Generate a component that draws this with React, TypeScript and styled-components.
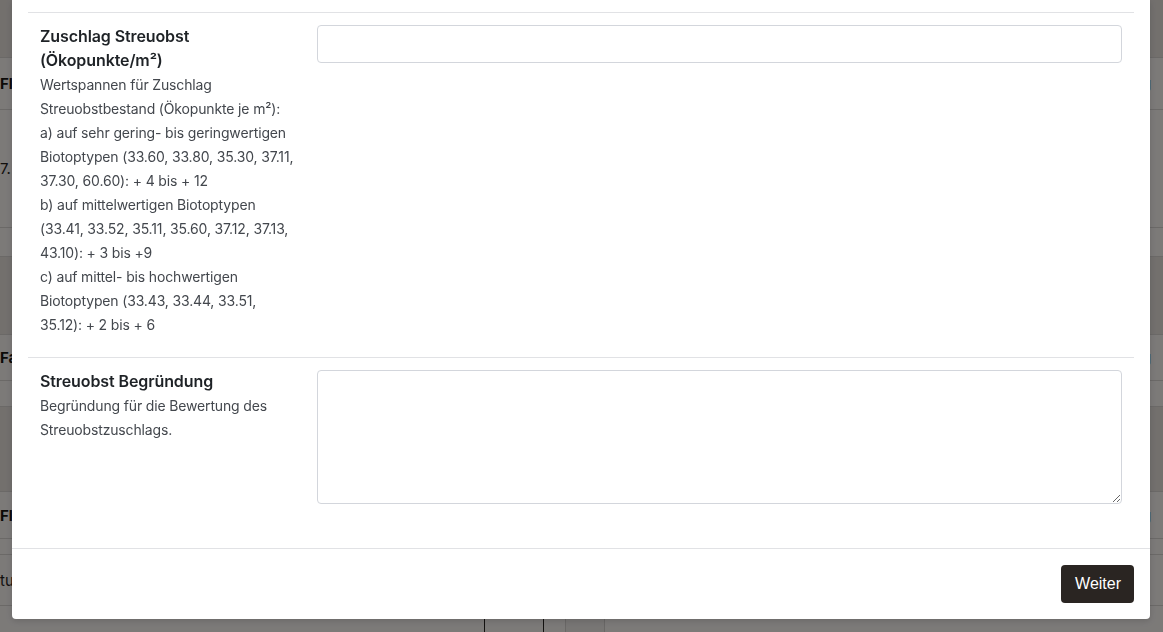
import React from 'react';
import styled, { createGlobalStyle, css } from 'styled-components';

const GlobalStyle = createGlobalStyle`
  html, body {
    margin: 0;
    padding: 0;
    height: 100%;
    overflow: hidden;
    background: #fff;
  }
  #root {
    height: 100%;
  }
`;

/* ---------- page behind the modal ---------- */

const Page = styled.div`
  height: 100%;
  display: grid;
  grid-template-columns: 575px 40px 1fr;
  font-family: Inter, 'Liberation Sans', sans-serif;
  font-size: 15px;
  color: #1d1d1d;
  margin-left: -10px;
`;

const PageColumn = styled.div`
  display: flex;
  flex-direction: column;
`;

const Spacer = styled.div`
  background: #f7f7f7;
  border-left: 1px solid #d9d9d9;
  border-right: 1px solid #d9d9d9;
`;

type BgRowKind = 'band' | 'head' | 'data';

const BgRow = styled.div<{ $h: number; $kind: BgRowKind; $align?: 'left' | 'right' }>`
  height: ${(p) => p.$h}px;
  flex: none;
  display: flex;
  align-items: center;
  justify-content: ${(p) => (p.$align === 'right' ? 'flex-end' : 'flex-start')};
  padding: 0 12px 0 10px;
  border-bottom: 1px solid #dcdcdc;
  ${(p) =>
    p.$kind === 'band' &&
    css`
      background: #ebeae8;
    `}
  ${(p) =>
    p.$kind === 'head' &&
    css`
      font-weight: 700;
      color: #111;
    `}
`;

const GhostButton = styled.div`
  margin: 0 0 0 494px;
  width: 58px;
  height: 30px;
  border: 1px solid #222;
  border-radius: 5px;
`;

const rows: { h: number; kind: BgRowKind; left?: string; right?: string }[] = [
  { h: 57, kind: 'band' },
  { h: 51, kind: 'head', left: 'Flächen', right: 'Bewertung' },
  { h: 117, kind: 'data', left: '7.' },
  { h: 28, kind: 'data' },
  { h: 77, kind: 'band' },
  { h: 45, kind: 'head', left: 'Fachbeitrag', right: 'Bewertung' },
  { h: 25, kind: 'data' },
  { h: 84, kind: 'band' },
  { h: 46, kind: 'head', left: 'Flächen', right: 'Bewertung' },
  { h: 15, kind: 'data' },
  { h: 50, kind: 'data', left: 'tu' },
];

/* ---------- modal ---------- */

const Backdrop = styled.div`
  position: fixed;
  inset: 0;
  background: rgba(8, 4, 0, 0.53);
  display: flex;
  flex-direction: column;
  justify-content: flex-end;
  padding: 0 13px 13px 12px;
`;

const Dialog = styled.div`
  background: #fff;
  border-radius: 0 0 4px 4px;
  box-shadow: 0 2px 6px rgba(0, 0, 0, 0.15);
  font-family: Inter, 'Liberation Sans', sans-serif;
  color: #1f2328;
`;

const Body = styled.div`
  padding: 12px 16px 24px;
`;

const Field = styled.div`
  display: grid;
  grid-template-columns: 258px 1fr;
  column-gap: 19px;
  align-items: start;
  padding: 12px 12px 20px;
  border-top: 1px solid #e1e2e5;
`;

const LabelColumn = styled.div`
  display: flex;
  flex-direction: column;
`;

const FieldTitle = styled.div`
  font-size: 16px;
  font-weight: 600;
  line-height: 24px;
  color: #1e2226;
  letter-spacing: -0.1px;
  margin-top: -1px;
  margin-bottom: 1px;
`;

const Help = styled.div`
  font-size: 14px;
  line-height: 24px;
  color: #43474d;
  letter-spacing: -0.15px;
`;

const controlBase = css`
  box-sizing: border-box;
  width: 100%;
  border: 1px solid #d3d6dc;
  border-radius: 4px;
  background: #fff;
  font-family: inherit;
  font-size: 14px;
  padding: 8px 12px;
  margin: 0;
  outline: none;
`;

const TextInput = styled.input`
  ${controlBase};
  height: 38px;
`;

const TextArea = styled.textarea`
  ${controlBase};
  height: 134px;
  resize: vertical;
  display: block;
`;

const Footer = styled.div`
  display: flex;
  justify-content: flex-end;
  padding: 16px;
  border-top: 1px solid #e1e2e5;
`;

const PrimaryButton = styled.button`
  height: 38px;
  padding: 0 13px 0 14px;
  border: none;
  border-radius: 4px;
  background: #2a2522;
  color: #fff;
  font-family: 'Liberation Sans', Arial, sans-serif;
  font-size: 16px;
  font-weight: 500;
  cursor: pointer;
`;

export default function App() {
  return (
    <>
      <GlobalStyle />
      <Page>
        <PageColumn>
          {rows.map((r, i) => (
            <BgRow key={`l-${i}`} $h={r.h} $kind={r.kind}>
              {r.left}
            </BgRow>
          ))}
          <GhostButton />
        </PageColumn>
        <Spacer />
        <PageColumn>
          {rows.map((r, i) => (
            <BgRow key={`r-${i}`} $h={r.h} $kind={r.kind} $align="right">
              {r.right}
            </BgRow>
          ))}
        </PageColumn>
      </Page>

      <Backdrop>
        <Dialog>
          <Body>
            <Field>
              <LabelColumn>
                <FieldTitle>Zuschlag Streuobst (Ökopunkte/m²)</FieldTitle>
                <Help>
                  <div>Wertspannen für Zuschlag Streuobstbestand (Ökopunkte je m²):</div>
                  <div>
                    a) auf sehr gering- bis geringwertigen Biotoptypen (33.60, 33.80, 35.30,
                    37.11, 37.30, 60.60): + 4 bis + 12
                  </div>
                  <div>
                    b) auf mittelwertigen Biotoptypen (33.41, 33.52, 35.11, 35.60, 37.12, 37.13,
                    43.10): + 3 bis +9
                  </div>
                  <div>
                    c) auf mittel- bis hochwertigen Biotoptypen (33.43, 33.44, 33.51, 35.12): + 2
                    bis + 6
                  </div>
                </Help>
              </LabelColumn>
              <TextInput type="text" />
            </Field>
            <Field>
              <LabelColumn>
                <FieldTitle>Streuobst Begründung</FieldTitle>
                <Help>Begründung für die Bewertung des Streuobstzuschlags.</Help>
              </LabelColumn>
              <TextArea />
            </Field>
          </Body>
          <Footer>
            <PrimaryButton>Weiter</PrimaryButton>
          </Footer>
        </Dialog>
      </Backdrop>
    </>
  );
}
